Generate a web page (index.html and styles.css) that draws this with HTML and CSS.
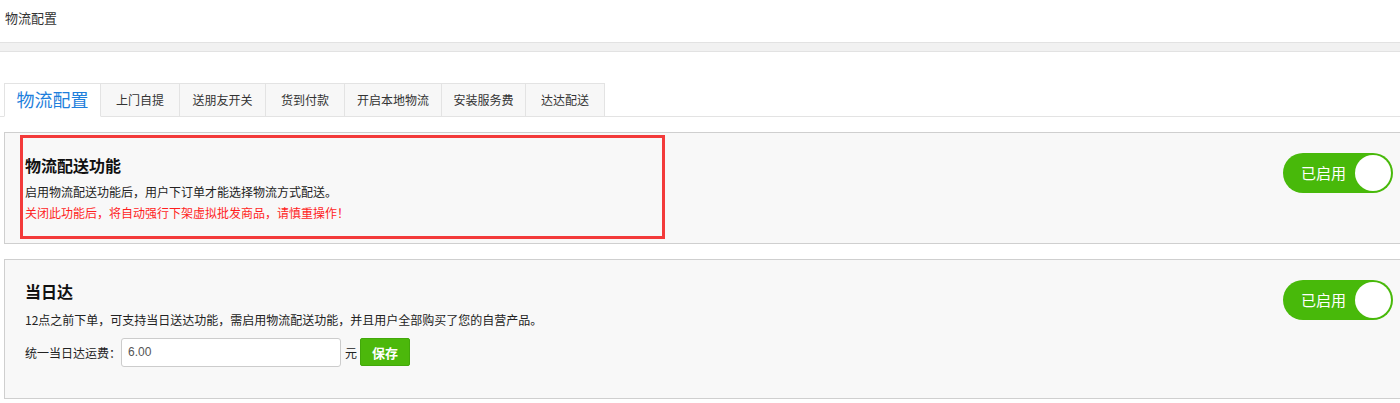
FILE: index.html
```html
<!DOCTYPE html>
<html lang="zh-CN">
<head>
<meta charset="utf-8">
<title>物流配置</title>
<link rel="stylesheet" href="styles.css">
</head>
<body>
<div class="page">
  <div class="topbar">物流配置</div>
  <div class="strip"></div>
  <div class="main">
    <div class="tabs">
      <div class="tab active">物流配置</div>
      <div class="tab">上门自提</div>
      <div class="tab">送朋友开关</div>
      <div class="tab">货到付款</div>
      <div class="tab">开启本地物流</div>
      <div class="tab">安装服务费</div>
      <div class="tab">达达配送</div>
    </div>

    <div class="panel panel-first">
      <div class="panel-body">
        <h3 class="panel-title">物流配送功能</h3>
        <p class="panel-desc">启用物流配送功能后，用户下订单才能选择物流方式配送。</p>
        <p class="panel-warn">关闭此功能后，将自动强行下架虚拟批发商品，请慎重操作！</p>
      </div>
      <div class="switch"><span class="switch-label">已启用</span><span class="switch-knob"></span></div>
      <div class="highlight"></div>
    </div>

    <div class="panel panel-second">
      <div class="panel-body">
        <h3 class="panel-title">当日达</h3>
        <p class="panel-desc desc-gap">12点之前下单，可支持当日送达功能，需启用物流配送功能，并且用户全部购买了您的自营产品。</p>
        <div class="fee-row">
          <span class="fee-label">统一当日达运费：</span>
          <input class="fee-input" type="text" value="6.00">
          <span class="fee-unit">元</span>
          <button class="btn-save" type="button">保存</button>
        </div>
      </div>
      <div class="switch"><span class="switch-label">已启用</span><span class="switch-knob"></span></div>
    </div>
  </div>
</div>
</body>
</html>
```

FILE: styles.css
```css
* { box-sizing: border-box; }
html, body { margin: 0; padding: 0; background: #fff; overflow: hidden; }
body {
  font-family: "Microsoft YaHei", "Noto Sans CJK SC", "Noto Sans", sans-serif;
  color: #333;
  font-size: 12px;
}
.page { width: 1400px; }
.topbar {
  height: 42px;
  padding: 9px 0 0 5px;
  font-size: 13px;
  line-height: 17px;
  color: #333;
}
.strip {
  height: 10px;
  background: #f1f1f1;
  border-top: 1px solid #e2e2e2;
  border-bottom: 1px solid #e2e2e2;
}
.main {
  padding: 31px 0 0 4px;
  margin-right: -8px;
}
.tabs {
  display: flex;
  align-items: flex-end;
  height: 34px;
  border-bottom: 1px solid #e3e3e3;
  margin-left: -4px;
  padding-left: 4px;
}
.tab {
  height: 34px;
  line-height: 31px;
  padding: 0;
  text-align: center;
  background: #f7f7f7;
  border-top: 1px solid #e3e3e3;
  border-right: 1px solid #e3e3e3;
  border-bottom: 1px solid #e3e3e3;
  font-size: 12px;
  color: #333;
  margin-bottom: -1px;
}
.tab:nth-child(2) { width: 79px; }
.tab:nth-child(3) { width: 86px; }
.tab:nth-child(4) { width: 79px; }
.tab:nth-child(5) { width: 97px; }
.tab:nth-child(6) { width: 84px; }
.tab:nth-child(7) { width: 79px; }
.tab.active {
  width: 97px;
  background: #fff;
  border-left: 1px solid #e3e3e3;
  border-bottom: 1px solid #fff;
  color: #1f7fdc;
  font-size: 18px;
}
.panel {
  position: relative;
  display: flex;
  justify-content: space-between;
  align-items: flex-start;
  background: #f8f8f8;
  border: 1px solid #cfcfcf;
  margin-top: 15px;
}
.panel-first { height: 112px; }
.panel-second { height: 140px; }
.panel-body { flex: 1; padding-left: 20px; }
.panel-first .panel-body { padding-top: 21px; }
.panel-second .panel-body { padding-top: 20px; }
.panel-title {
  margin: 0;
  font-size: 16px;
  line-height: 22px;
  font-weight: bold;
  color: #111;
}
.panel-first .panel-title { margin-bottom: 5px; }
.panel-desc {
  margin: 0;
  font-size: 12px;
  line-height: 21px;
  color: #222;
}
.desc-gap { margin-top: 7px; line-height: 22px; }
.panel-warn {
  margin: 0;
  font-size: 12px;
  line-height: 22px;
  color: #ff1e1e;
}
.switch {
  display: flex;
  align-items: center;
  justify-content: space-between;
  width: 110px;
  height: 40px;
  margin: 20px 14px 0 0;
  background: #48b90a;
  border-radius: 20px;
  padding: 0 2px 0 18px;
}
.switch-label {
  color: #fff;
  font-size: 15px;
  line-height: 20px;
}
.switch-knob {
  width: 36px;
  height: 36px;
  border-radius: 50%;
  background: #fff;
}
.highlight {
  position: absolute;
  left: 15px;
  top: 2px;
  width: 645px;
  height: 104px;
  border: 3px solid #f33a3a;
  pointer-events: none;
}
.fee-row {
  display: flex;
  align-items: center;
  margin-top: 6px;
  height: 30px;
}
.fee-label { font-size: 12px; color: #222; }
.fee-input {
  width: 220px;
  height: 29px;
  border: 1px solid #ccc;
  border-radius: 3px;
  background: #fff;
  padding: 0 6px;
  font-family: "Liberation Sans", "Noto Sans CJK SC", sans-serif;
  font-size: 12px;
  color: #555;
  outline: none;
}
.fee-unit { margin: 0 3px 0 4px; font-size: 12px; color: #222; }
.btn-save {
  width: 50px;
  height: 28px;
  border: 1px solid #42a80a;
  border-radius: 2px;
  background: #4cb80b;
  color: #fff;
  font-family: "Microsoft YaHei", "Noto Sans CJK SC", sans-serif;
  font-size: 13px;
  font-weight: bold;
  padding: 0;
}
```
